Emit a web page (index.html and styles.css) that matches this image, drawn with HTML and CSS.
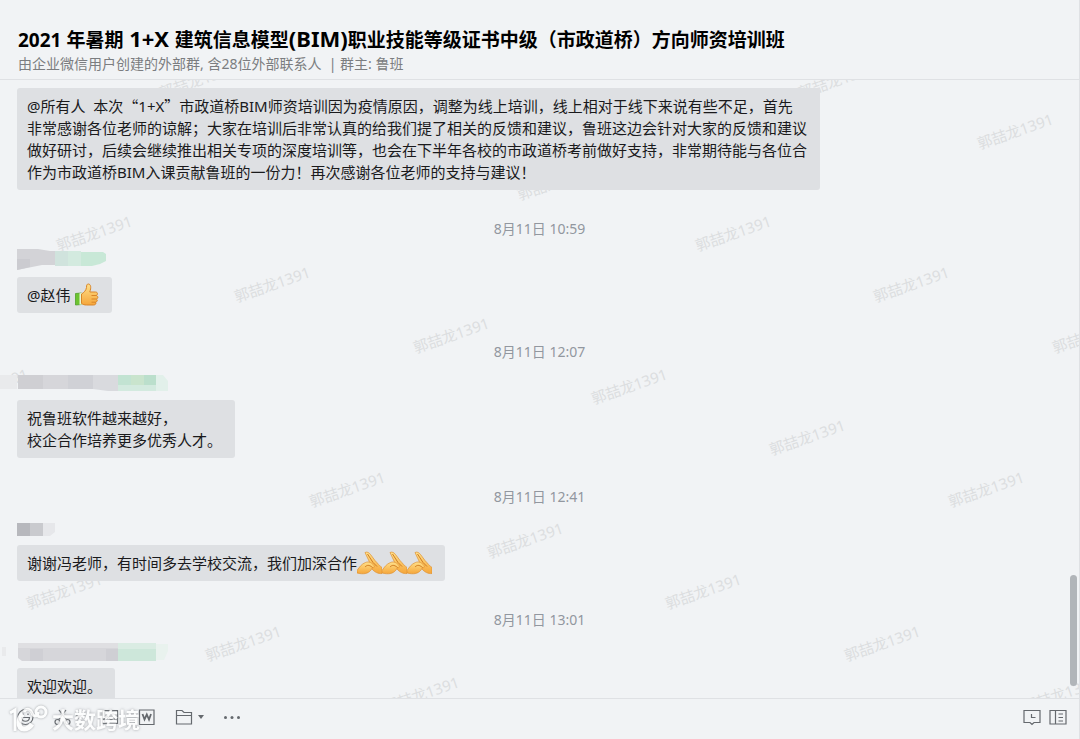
FILE: index.html
```html
<!DOCTYPE html>
<html lang="zh-CN">
<head>
    <meta charset="UTF-8">
    <meta name="viewport" content="width=device-width, initial-scale=1.0">
    <title>群聊</title>
    <link rel="stylesheet" href="styles.css">
</head>
<body>

    <!-- shared emoji -->
    <svg class="defs" aria-hidden="true">
        <defs>
            <linearGradient id="skin" x1="0" y1="0" x2="0" y2="1">
                <stop offset="0" stop-color="#ffe08a"/>
                <stop offset="1" stop-color="#f5a63a"/>
            </linearGradient>
        </defs>
        <symbol id="thumb" viewBox="0 0 24 24">
            <path d="M1 10.500L7 10V21.500L1 22Z" fill="#6cc331" stroke="#4f9f2a" stroke-width=".8"/>
            <path d="M5 10.300L7.500 10V21.500L5 21.800Z" fill="#e9f7d5"/>
            <path d="M7 11C9.500 9.500 11.500 7.500 12 4.500C12 2 12.500 1 13.800 1C16.500 1.200 16.800 4.500 15.300 9H21C23.500 9 23.500 12 21.700 12.500C24 13 23.700 15.800 21.800 16C23.500 16.800 22.800 19 21 19.200C22 20.500 21 22 19 22H12C10 22 8.500 21.500 7 20.500Z" fill="url(#skin)" stroke="#d98528" stroke-width="1"/>
            <path d="M17 12.500H21.500M17 16H21.500M17 19.200H21" fill="none" stroke="#d98528" stroke-width="1"/>
        </symbol>
        <symbol id="clap" viewBox="0 0 25 24">
            <path d="M8 1.500C10 .5 12 1.500 13.500 3.500L18 9.500C20.500 12 22.500 15 25 16.500V22.500C21 23 17.500 21 15 18L12 10Z" fill="url(#skin)" stroke="#e0902f" stroke-width=".7"/>
            <path d="M0 19.500C2.500 16 4.500 13 8.500 11.500C12 10 15 12 17 14.500C18 16 17 17 15.500 16.500L14 19C11 23 6 23.500 0 22Z" fill="url(#skin)" stroke="#e0902f" stroke-width=".7"/>
            <path d="M10.500 3L16 11.500L20 15.500M8 16C10 14 12 13.500 15.500 16.500" fill="none" stroke="#cf7c22" stroke-width="1"/>
        </symbol>
    </svg>

    <div class="window">
        <header class="header">
            <h1>2021 年暑期<span class="latin"> 1+X </span>建筑信息模型<span class="latin">(BIM)</span>职业技能等级证书中级（市政道桥）方向师资培训班</h1>
            <p>由企业微信用户创建的外部群, 含28位外部联系人 &nbsp;| 群主: 鲁班</p>
        </header>

        <main class="chat">
            <svg class="watermark" aria-hidden="true">
                <text transform="translate(197 0) rotate(-19)">郭喆龙1391</text>
                <text transform="translate(836 0) rotate(-19)">郭喆龙1391</text>
                <text transform="translate(1015 51) rotate(-19)">郭喆龙1391</text>
                <text transform="translate(555 102) rotate(-19)">郭喆龙1391</text>
                <text transform="translate(94 153) rotate(-19)">郭喆龙1391</text>
                <text transform="translate(733 153) rotate(-19)">郭喆龙1391</text>
                <text transform="translate(272 204) rotate(-19)">郭喆龙1391</text>
                <text transform="translate(911 204) rotate(-19)">郭喆龙1391</text>
                <text transform="translate(451 255) rotate(-19)">郭喆龙1391</text>
                <text transform="translate(1090 255) rotate(-19)">郭喆龙1391</text>
                <text transform="translate(-10 306) rotate(-19)">郭喆龙1391</text>
                <text transform="translate(629 306) rotate(-19)">郭喆龙1391</text>
                <text transform="translate(807 357) rotate(-19)">郭喆龙1391</text>
                <text transform="translate(347 409) rotate(-19)">郭喆龙1391</text>
                <text transform="translate(986 409) rotate(-19)">郭喆龙1391</text>
                <text transform="translate(525 460) rotate(-19)">郭喆龙1391</text>
                <text transform="translate(64 511) rotate(-19)">郭喆龙1391</text>
                <text transform="translate(703 511) rotate(-19)">郭喆龙1391</text>
                <text transform="translate(243 563) rotate(-19)">郭喆龙1391</text>
                <text transform="translate(882 563) rotate(-19)">郭喆龙1391</text>
                <text transform="translate(421 614) rotate(-19)">郭喆龙1391</text>
                <text transform="translate(1060 614) rotate(-19)">郭喆龙1391</text>
            </svg>

            <div class="messages">
                <div class="bubble">@所有人&nbsp; 本次<span class="cjk">“</span>1+X<span class="cjk">”</span>市政道桥BIM师资培训因为疫情原因，调整为线上培训，线上相对于线下来说有些不足，首先<br>非常感谢各位老师的谅解；大家在培训后非常认真的给我们提了相关的反馈和建议，鲁班这边会针对大家的反馈和建议<br>做好研讨，后续会继续推出相关专项的深度培训等，也会在下半年各校的市政道桥考前做好支持，非常期待能与各位合<br>作为市政道桥BIM入课贡献鲁班的一份力！再次感谢各位老师的支持与建议！</div>

                <time>8月11日 10:59</time>
                <svg class="sender" viewBox="0 0 180 20">
                    <path d="M17 1H38L50 3H60V17H42L17 22Z" fill="#d3d3d7"/>
                    <path d="M17 11H30V19L17 22Z" fill="#cbcbd0"/>
                    <path d="M55 3H68V18H55Z" fill="#d0e3dd"/>
                    <path d="M68 3H81V18H68Z" fill="#d3eadf"/>
                    <path d="M81 4H103L106 6V13L100 16L92 18H81Z" fill="#c8e8d7"/>
                </svg>
                <div class="bubble">@赵伟 <svg class="emoji" role="img" aria-label="赞"><use href="#thumb"/></svg></div>

                <time>8月11日 12:07</time>
                <svg class="sender" viewBox="0 0 180 20">
                    <path d="M0 4H17V18H0Z" fill="#e9eaec"/>
                    <path d="M18 4H43V18H18Z" fill="#cfcfd3"/>
                    <path d="M43 4H68V18H43Z" fill="#d6d6da"/>
                    <path d="M68 4H93V18H68Z" fill="#d0d1d6"/>
                    <path d="M93 4H118V20H108L93 18Z" fill="#d9dade"/>
                    <path d="M118 4H156V20H118Z" fill="#d3eadf"/>
                    <path d="M118 4H131V14H118Z" fill="#c2e3d2"/>
                    <path d="M131 4H144V14H131Z" fill="#c9e4cd"/>
                    <path d="M144 4H156V14H144Z" fill="#bbdfcc"/>
                    <path d="M156 4H163L168 10V20H156Z" fill="#e2f0ea"/>
                </svg>
                <div class="bubble">祝鲁班软件越来越好，<br>校企合作培养更多优秀人才。</div>

                <time>8月11日 12:41</time>
                <svg class="sender" viewBox="0 0 180 20">
                    <path d="M17 7H30V20H17Z" fill="#b7b8bd"/>
                    <path d="M30 7H43V20H30Z" fill="#c9cace"/>
                    <path d="M43 7H55V16L50 20H43Z" fill="#e6e7ea"/>
                </svg>
                <div class="bubble">谢谢冯老师，有时间多去学校交流，我们加深合作<svg class="emoji" role="img" aria-label="鼓掌"><use href="#clap"/></svg><svg class="emoji" role="img" aria-label="鼓掌"><use href="#clap"/></svg><svg class="emoji" role="img" aria-label="鼓掌"><use href="#clap"/></svg></div>

                <time>8月11日 13:01</time>
                <svg class="sender" viewBox="0 0 180 20">
                    <path d="M2 8H6V17H2Z" fill="#e9eaec"/>
                    <path d="M18 4H118V10H18Z" fill="#dfdfe2"/>
                    <path d="M18 9H118V22H22L18 19Z" fill="#d6d6da"/>
                    <path d="M30 10H43V22H30ZM106 10H118V22H106Z" fill="#cfcfd4"/>
                    <path d="M118 4H156V10H118Z" fill="#daece3"/>
                    <path d="M118 10H156V22H118Z" fill="#cde7da"/>
                    <path d="M156 5H168V12L164 21H156Z" fill="#e9f2ee"/>
                </svg>
                <div class="bubble">欢迎欢迎。</div>
            </div>

            <div class="scrollbar"></div>
        </main>

        <footer class="toolbar">
            <button type="button" aria-label="表情">
                <svg viewBox="0 0 18 18"><circle cx="9.500" cy="9" r="7.500"/><path d="M5.500 9.500C6 14.500 13 14.500 13.500 9.500ZM7 5.500V7M12 5.500V7"/></svg>
            </button>
            <button type="button" aria-label="截图">
                <svg viewBox="0 0 18 18"><circle cx="4.500" cy="14" r="2.500"/><circle cx="14.500" cy="14" r="2.500"/><path d="M5.500 12L13 2M13.500 12L6 2"/></svg>
                <svg class="caret" viewBox="0 0 6 4"><path d="M0 0H6L3 4Z"/></svg>
            </button>
            <button type="button" aria-label="图片">
                <svg viewBox="0 0 18 18"><path d="M1.500 2.500H16.500V15.500H1.500ZM1.500 13L6 8L10 12L12.500 10L16.500 13M11 6H13"/></svg>
            </button>
            <button type="button" aria-label="文档">
                <svg viewBox="0 0 18 18"><path d="M1.500 2H16V16.500H1.500Z"/><path class="bold" d="M4.500 6L6.500 11.500L8.800 6.500L11 11.500L13 6"/></svg>
            </button>
            <button type="button" aria-label="文件">
                <svg viewBox="0 0 18 18"><path d="M1.500 16V2.500H7L9 4.500H16.500V16ZM1.500 7.500H16.500"/></svg>
                <svg class="caret" viewBox="0 0 6 4"><path d="M0 0H6L3 4Z"/></svg>
            </button>
            <button type="button" class="more" aria-label="更多">
                <svg viewBox="0 0 18 18"><circle cx="2.500" cy="9.500" r="1.500"/><circle cx="9" cy="9.500" r="1.500"/><circle cx="15.500" cy="9.500" r="1.500"/></svg>
            </button>
            <div class="tools-right">
                <button type="button" aria-label="聊天记录">
                    <svg viewBox="0 0 18 18"><path d="M1 2.500H17V14.500H11L9 16.500L7 14.500H1ZM8.500 6V9.500H12.500"/></svg>
                </button>
                <button type="button" aria-label="侧边栏">
                    <svg viewBox="0 0 18 18"><path d="M1 2.500H17V16H1ZM6.500 2.500V16M9.500 6H14M9.500 9.500H14M9.500 13H14"/></svg>
                </button>
            </div>

            <div class="brand">
                <svg viewBox="0 0 40 28"><path d="M1 8L6 5V26"/><path class="thick" d="M14 9C9 13 8 24 15 24C19 24 21 22 23 19"/><path d="M15 7C18 2 22 5 23 8C24 12 29 12 29 7"/><circle cx="32" cy="7" r="5"/></svg>
                <span>大数跨境</span>
            </div>
        </footer>
    </div>

</body>
</html>
```

FILE: styles.css
```css
* {
    box-sizing: border-box;
}

body {
    margin: 0;
    font-family: "Noto Sans", "Noto Sans CJK SC", sans-serif;
    font-size: 15px;
    color: #1a1a1c;
    background-color: #f1f3f5;
}

.defs {
    position: absolute;
    width: 0;
    height: 0;
}

.window {
    display: flex;
    flex-direction: column;
    height: 100vh;
    border-right: 1px solid #dfe1e4;
}

/* header */
.header {
    padding: 26px 18px 5px;
    border-bottom: 1px solid #dfe1e4;
}

.header h1 {
    margin: 0;
    font-size: 19px;
    line-height: 28px;
    color: #000;
    white-space: nowrap;
}

.latin {
    font-size: 22px;
    line-height: 20px;
}

.header p {
    margin: 0;
    font-size: 14px;
    line-height: 20px;
    color: #7b7d80;
}

/* chat */
.chat {
    position: relative;
    flex: 1;
    min-height: 0;
    overflow: hidden;
}

.watermark {
    position: absolute;
    width: 100%;
    height: 100%;
}

.watermark text {
    font-size: 15px;
    fill: #dcdee0;
    text-anchor: middle;
    dominant-baseline: central;
}

.messages {
    position: relative;
    display: flex;
    flex-direction: column;
    align-items: flex-start;
    padding-top: 8px;
}

.bubble {
    margin-left: 17px;
    padding: 7px 13px 7px 10px;
    line-height: 22px;
    background-color: #dee0e3;
    border-radius: 3px;
    white-space: nowrap;
}

.cjk {
    font-family: "Noto Sans CJK SC", sans-serif;
}

time {
    align-self: center;
    margin-top: 29px;
    font-size: 14px;
    line-height: 20px;
    color: #92979f;
}

.sender {
    width: 180px;
    height: 20px;
    margin: 9px 0;
    overflow: visible;
}

.emoji {
    width: 25px;
    height: 24px;
    margin: -6px 0 -2px;
    vertical-align: middle;
}

.scrollbar {
    position: absolute;
    right: 2px;
    bottom: 12px;
    width: 7px;
    height: 111px;
    border-radius: 4px;
    background-color: #b1b5b9;
}

/* toolbar */
.toolbar {
    position: relative;
    display: flex;
    align-items: center;
    gap: 19px;
    height: 41px;
    padding: 0 12px 4px 16px;
    border-top: 1px solid #dfe1e4;
}

button {
    display: flex;
    align-items: center;
    gap: 5px;
    padding: 0;
    border: none;
    background: none;
    cursor: pointer;
}

button svg {
    width: 18px;
    height: 18px;
    fill: none;
    stroke: #65696e;
    stroke-width: 1.2;
}

button .bold {
    stroke-width: 1.8;
}

button .caret {
    width: 6px;
    height: 4px;
    fill: #65696e;
    stroke: none;
}

.more svg {
    fill: #65696e;
    stroke: none;
}

.tools-right {
    display: flex;
    gap: 8px;
    margin-left: auto;
}

.brand {
    position: absolute;
    left: 9px;
    top: 6px;
    display: flex;
    align-items: center;
    gap: 3px;
    font-size: 22px;
    font-weight: bold;
    line-height: 28px;
    color: #fff;
    text-shadow: 0 0 3px #909397;
    opacity: 0.85;
    pointer-events: none;
}

.brand svg {
    width: 40px;
    height: 28px;
    fill: none;
    stroke: #fff;
    stroke-width: 3;
    filter: drop-shadow(0 0 1px #909397);
}

.brand .thick {
    stroke-width: 5;
}
```
